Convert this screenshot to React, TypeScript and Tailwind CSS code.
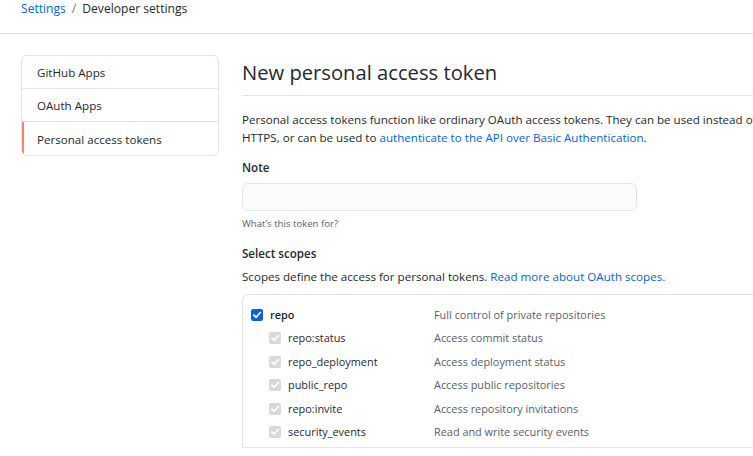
import React from "react";

const font = { fontFamily: '"Open Sans", "Noto Sans", sans-serif' };

function Check({ disabled }: { disabled?: boolean }) {
  return (
    <span
      className={
        "flex h-[12px] w-[12px] shrink-0 items-center justify-center rounded-[2px] " +
        (disabled ? "bg-[#d9d9d9]" : "bg-[#0a63d6]")
      }
    >
      <svg width="10" height="10" viewBox="0 0 10 10" fill="none">
        <path d="M2 5.2 L4.1 7.3 L8.2 2.6" stroke="white" strokeWidth="1.7" strokeLinecap="square" />
      </svg>
    </span>
  );
}

const scopes: [string, string][] = [
  ["repo:status", "Access commit status"],
  ["repo_deployment", "Access deployment status"],
  ["public_repo", "Access public repositories"],
  ["repo:invite", "Access repository invitations"],
  ["security_events", "Read and write security events"],
];

export default function App() {
  return (
    <div className="h-[456px] w-[753px] overflow-hidden bg-white text-[11.6px] text-[#24292e]" style={font}>
      <div className="flex h-[34px] items-start border-b border-[#e1e4e8] pl-[21px]">
        <div className="flex h-[18px] items-center text-[12.1px] leading-[18px]">
          <span className="text-[#0366d6]">Settings</span>
          <span className="mx-[6px] text-[#6a737d]">/</span>
          <span>Developer settings</span>
        </div>
      </div>
      <div className="flex pt-[21px] pl-[21px]">
        <div className="w-[198px] shrink-0">
          <div className="overflow-hidden rounded-[6px] border border-[#e1e4e8]">
            <div className="flex h-[33px] items-center border-b border-[#e1e4e8] pt-[2px] pl-[15px]">GitHub Apps</div>
            <div className="flex h-[33px] items-center border-b border-[#e1e4e8] pt-[2px] pl-[15px]">OAuth Apps</div>
            <div className="flex h-[33px] items-center border-l-2 border-[#f9826c] pt-[2px] pl-[13px]">Personal access tokens</div>
          </div>
        </div>
        <div className="ml-[23px] min-w-0 flex-1 overflow-hidden">
          <div className="border-b border-[#e1e4e8] pt-[2px] pb-[8px]">
            <h1 className="text-[20.2px] leading-[30px] font-normal whitespace-nowrap">New personal access token</h1>
          </div>
          <p className="mt-[15px] leading-[17.5px] whitespace-nowrap">
            <span className="block">
              Personal access tokens function like ordinary OAuth access tokens. They can be used instead of a password for Git over
            </span>
            <span className="block">
              HTTPS, or can be used to <span className="text-[#0366d6]">authenticate to the API over Basic Authentication</span>.
            </span>
          </p>
          <div className="mt-[13px] leading-[17.5px] font-semibold">Note</div>
          <div className="mt-[6px] h-[28px] w-[395px] rounded-[6px] border border-[#e1e4e8] bg-[#fafbfc]" />
          <div className="mt-[5px] text-[9.6px] leading-[15px] text-[#586069]">What’s this token for?</div>
          <div className="mt-[14px] leading-[17.5px] font-semibold">Select scopes</div>
          <div className="mt-[5.5px] leading-[17.5px]">
            Scopes define the access for personal tokens.{" "}
            <span className="text-[#0366d6]">Read more about OAuth scopes.</span>
          </div>
          <div className="mt-[8.5px] rounded-tl-[6px] border-t border-l border-[#e1e4e8] text-[10.9px]">
            <div className="border-b border-[#e1e4e8] pt-[11px] pb-[5px]">
              <div className="flex h-[19px] items-center">
                <div className="flex w-[191px] items-center pl-[8px]">
                  <Check />
                  <span className="ml-[7px] font-semibold">repo</span>
                </div>
                <span className="text-[#586069]">Full control of private repositories</span>
              </div>
              {scopes.map(([n, d]) => (
                <div key={n} className="mt-[4.5px] flex h-[19px] items-center">
                  <div className="flex w-[191px] items-center pl-[26px]">
                    <Check disabled />
                    <span className="ml-[7px]">{n}</span>
                  </div>
                  <span className="text-[#586069]">{d}</span>
                </div>
              ))}
            </div>
          </div>
        </div>
      </div>
    </div>
  );
}
